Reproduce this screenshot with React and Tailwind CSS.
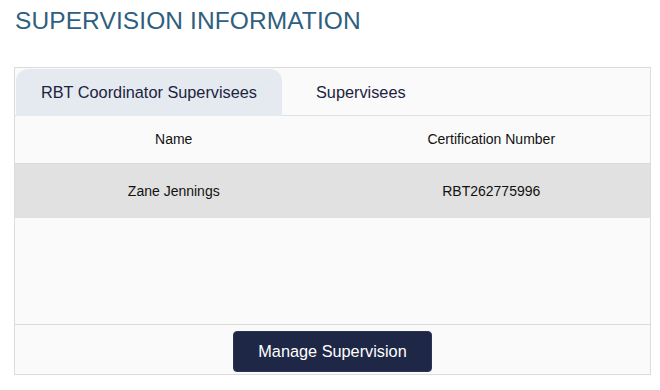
export default function App() {
  const rows = [{ name: 'Zane Jennings', cert: 'RBT262775996' }];

  return (
    <div className="w-[660px] h-[390px] bg-white font-['Liberation_Sans',Arial,sans-serif]">
      <h1 className="pt-[7px] pl-[15px] text-[24.5px] leading-[28px] text-[#2f5f80] tracking-[0.1px]">
        SUPERVISION INFORMATION
      </h1>

      <div className="mt-[32px] ml-[14px] w-[637px] h-[308px] border border-[#dcdcdc] bg-[#fafafa] flex flex-col">
        {/* Tabs */}
        <div className="flex h-[48px] pl-[1px] pt-[1px] border-b border-[#e0e0e0]">
          <div className="w-[266px] h-[47px] rounded-t-[12px] bg-[#e5eaf0] flex items-center justify-center text-[16.3px] text-[#1c2340]">
            RBT Coordinator Supervisees
          </div>
          <div className="h-[47px] pl-[34px] flex items-center text-[16.3px] text-[#1c2340]">
            Supervisees
          </div>
        </div>

        {/* Table header */}
        <div className="grid grid-cols-2 h-[47px] items-center text-center text-[14px] text-[#111]">
          <div>Name</div>
          <div>Certification Number</div>
        </div>

        {rows.map((r) => (
          <div
            key={r.cert}
            className="grid grid-cols-2 h-[55px] items-center text-center text-[14px] text-[#111] bg-[#e1e1e1] border-t border-[#d6dce2]"
          >
            <div>{r.name}</div>
            <div>{r.cert}</div>
          </div>
        ))}

        <div className="flex-1" />

        {/* Footer */}
        <div className="h-[50px] border-t border-[#dcdcdc] flex justify-center pt-[6px]">
          <button className="w-[199px] h-[41px] rounded-[4px] bg-[#1f2746] border border-[#2c3555] text-white text-[16.3px]">
            Manage Supervision
          </button>
        </div>
      </div>
    </div>
  );
}
